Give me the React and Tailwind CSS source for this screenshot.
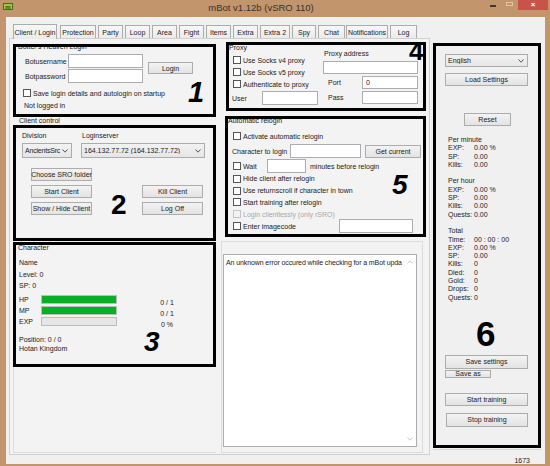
import React from "react";

function Btn({ className = "", children }) {
  return (
    <div
      className={
        "flex items-center justify-center shrink-0 whitespace-nowrap border border-[#acacac] bg-linear-to-b from-[#f3f3f3] to-[#e3e3e3] " +
        className
      }
    >
      {children}
    </div>
  );
}

function Input({ className = "", children }) {
  return (
    <div className={"shrink-0 bg-white border border-[#abadb3] flex items-center " + className}>
      {children}
    </div>
  );
}

function Check({ disabled }) {
  return (
    <div
      className={
        disabled
          ? "w-[8px] h-[8px] shrink-0 border border-[#c4c4c4] bg-[#f2f2f2]"
          : "w-[8px] h-[8px] shrink-0 border border-[#555555] bg-white"
      }
    />
  );
}

function Chevron({ color = "#444444" }) {
  return (
    <svg width="6" height="4" viewBox="0 0 6 4" className="shrink-0">
      <polyline points="0.5,0.5 3,3.2 5.5,0.5" fill="none" stroke={color} strokeWidth="0.9" />
    </svg>
  );
}

function Select({ className = "", children }) {
  return (
    <div
      className={
        "flex items-center justify-between shrink-0 border border-[#acacac] bg-linear-to-b from-[#f2f2f2] to-[#e6e6e6] pl-[2px] pr-[3px] overflow-hidden whitespace-nowrap " +
        className
      }
    >
      <span className="overflow-hidden">{children}</span>
      <Chevron />
    </div>
  );
}

function CheckRow({ className = "", label, disabled }) {
  return (
    <div className={"flex items-center " + className}>
      <Check disabled={disabled} />
      <span className={disabled ? "ml-[2px] text-[#a8a8a8]" : "ml-[2px]"}>{label}</span>
    </div>
  );
}

const tabs = [
  { label: "Client / Login", cls: "w-[44px] h-[15px] bg-white border-[#acacac] relative z-10 -mb-[1px]" },
  { label: "Protection", cls: "ml-[3px] w-[36px] h-[13px]" },
  { label: "Party", cls: "ml-[2px] w-[25px] h-[13px]" },
  { label: "Loop", cls: "ml-[2px] w-[25px] h-[13px]" },
  { label: "Area", cls: "ml-[2px] w-[25px] h-[13px]" },
  { label: "Fight", cls: "ml-[2px] w-[25px] h-[13px]" },
  { label: "Items", cls: "ml-[2px] w-[25px] h-[13px]" },
  { label: "Extra", cls: "ml-[2px] w-[25px] h-[13px]" },
  { label: "Extra 2", cls: "ml-[2px] w-[30px] h-[13px]" },
  { label: "Spy", cls: "ml-[2px] w-[24px] h-[13px]" },
  { label: "Chat", cls: "ml-[2px] w-[27px] h-[13px]" },
  { label: "Notifications", cls: "ml-[1px] w-[42px] h-[13px]" },
  { label: "Log", cls: "ml-[2px] w-[27px] h-[13px]" },
];

function TitleBar() {
  return (
    <div className="h-[17px] flex items-start shrink-0">
      <div className="ml-[3px] mt-[3px] w-[10px] h-[7px] bg-[#a9c53c] border border-[#4d6b12] flex items-center justify-center">
        <span className="text-[6px] leading-[6px] font-bold text-[#2d4a08]">m</span>
      </div>
      <div className="flex-1 pl-[21px] pt-[2px] text-center text-[9.5px] leading-[11px] text-[#333333]">
        mBot v1.12b (vSRO 110)
      </div>
      <div className="w-[62px] h-[10px] flex items-start">
        <div className="mt-[5px] ml-[2px] w-[6px] h-[1.5px] bg-[#3a3a3a]" />
        <div className="mt-[2px] ml-[10px] w-[7px] h-[4px] border border-[#e3c3a5]" />
        <div className="ml-[5px] w-[30px] h-[10px] bg-[#c9534b] flex items-center justify-center text-white text-[8px] leading-[8px] font-bold">
          ×
        </div>
      </div>
    </div>
  );
}

function LeftColumn() {
  return (
    <div className="ml-[3px] w-[203px] flex flex-col shrink-0">
      {/* Box 1 */}
      <div className="relative mt-[5px] w-[203px] h-[73px] border-[3px] border-black overflow-hidden flex flex-col">
        <div className="-mt-[4px] ml-[2px] h-[7px] leading-[7px] whitespace-nowrap">Botter's Heaven Login</div>
        <div className="flex mt-[4px] ml-[9px]">
          <div className="grid grid-cols-[43px_75px] gap-y-[1px] items-center">
            <span>Botusername</span>
            <Input className="w-[75px] h-[14px]" />
            <span>Botpassword</span>
            <Input className="w-[75px] h-[14px]" />
          </div>
          <Btn className="ml-[5px] mt-[8px] w-[45px] h-[12px]">Login</Btn>
        </div>
        <CheckRow className="mt-[6px] ml-[7px]" label="Save login details and autologin on startup" />
        <div className="mt-[5px] ml-[8px]">Not logged in</div>
        <div className="absolute left-[172px] top-[31px] text-[29px] leading-none font-bold italic text-black">1</div>
      </div>

      <div className="h-[8px] pl-[6px] leading-[8px] whitespace-nowrap">Client control</div>

      {/* Box 2 */}
      <div className="relative w-[203px] h-[116px] border-[3px] border-black flex flex-col">
        <div className="flex mt-[4px] ml-[6px]">
          <span className="w-[60px]">Division</span>
          <span>Loginserver</span>
        </div>
        <div className="flex mt-[4px] ml-[6px]">
          <Select className="w-[50px] h-[15px] tracking-[-0.2px]">AncientsSrc</Select>
          <Select className="ml-[9px] w-[124px] h-[15px]">164.132.77.72 (164.132.77.72)</Select>
        </div>
        <Btn className="mt-[10px] ml-[15px] w-[61px] h-[13px]">Choose SRO folder</Btn>
        <div className="flex mt-[4px] ml-[15px]">
          <Btn className="w-[61px] h-[13px]">Start Client</Btn>
          <Btn className="ml-[50px] w-[61px] h-[13px]">Kill Client</Btn>
        </div>
        <div className="flex mt-[4px] ml-[15px]">
          <Btn className="w-[61px] h-[13px]">Show / Hide Client</Btn>
          <Btn className="ml-[50px] w-[61px] h-[13px]">Log Off</Btn>
        </div>
        <div className="absolute left-[95px] top-[63px] text-[28px] leading-none font-bold text-black">2</div>
      </div>

      {/* Box 3 */}
      <div className="relative mt-[1px] w-[203px] h-[125px] border-[3px] border-black flex flex-col pl-[3px]">
        <div className="-mt-[1px] -ml-[1px] h-[7px] leading-[7px]">Character</div>
        <div className="mt-[6px] leading-[11.5px]">Name</div>
        <div className="leading-[11.5px]">Level: 0</div>
        <div className="leading-[11.5px]">SP: 0</div>
        <div className="mt-[2px] flex flex-col">
          {[
            { l: "HP", bar: "bg-[#06b025]", v: "0 / 1" },
            { l: "MP", bar: "bg-[#06b025]", v: "0 / 1" },
            { l: "EXP", bar: "bg-[#e6e6e6]", v: "0 %" },
          ].map((r) => (
            <div key={r.l} className="flex items-center h-[11px]">
              <span className="w-[22px]">{r.l}</span>
              <div className={"w-[76px] h-[9px] border border-[#bcbcbc] " + r.bar} />
              <span className="ml-[25px] w-[50px] text-center translate-y-[3px]">{r.v}</span>
            </div>
          ))}
        </div>
        <div className="mt-[8px] leading-[9px]">Position: 0 / 0</div>
        <div className="leading-[9px]">Hotan Kingdom</div>
        <div className="absolute left-[128px] top-[83px] text-[28px] leading-none font-bold italic text-black">3</div>
      </div>
      <div className="h-[86px] border-l border-b border-[#dcdcdc]" />
    </div>
  );
}

function RightColumn() {
  return (
    <div className="ml-[5px] w-[205px] flex flex-col shrink-0">
      {/* Box 4 */}
      <div className="relative ml-[5px] mt-[3px] w-[200px] h-[69px] border-[3px] border-black flex flex-col">
        <div className="-mt-[1px] h-[7px] leading-[7px]">Proxy</div>
        <div className="flex">
          <div className="w-[94px] flex flex-col">
            <CheckRow className="mt-[3px] h-[12px] pl-[4px]" label="Use Socks v4 proxy" />
            <CheckRow className="h-[12px] pl-[4px]" label="Use Socks v5 proxy" />
            <CheckRow className="h-[12px] pl-[4px]" label="Authenticate to proxy" />
            <div className="mt-[1px] flex items-center pl-[3px]">
              <span className="w-[30px]">User</span>
              <Input className="w-[56px] h-[14px]" />
            </div>
          </div>
          <div className="flex flex-col">
            <div className="-mt-[1px] ml-[1px] h-[7px] leading-[7px]">Proxy address</div>
            <Input className="mt-[4px] w-[95px] h-[13px]" />
            <div className="mt-[2px] flex items-center">
              <span className="w-[39px] pl-[5px]">Port</span>
              <Input className="w-[56px] h-[13px] pl-[3px]">0</Input>
            </div>
            <div className="mt-[2px] flex items-center">
              <span className="w-[39px] pl-[5px]">Pass</span>
              <Input className="w-[56px] h-[13px]" />
            </div>
          </div>
        </div>
        <div className="absolute left-[180px] top-[-7px] text-[26px] leading-none font-bold text-black">4</div>
      </div>

      {/* Box 5 */}
      <div className="relative ml-[4px] mt-[5px] w-[201px] h-[121px] border-[3px] border-black overflow-hidden flex flex-col">
        <div className="-mt-[2px] h-[7px] leading-[7px] whitespace-nowrap">Automatic relogin</div>
        <CheckRow className="mt-[7px] h-[10px] pl-[5px]" label="Activate automatic relogin" />
        <div className="mt-[3px] flex items-center">
          <span className="w-[62px] pl-[4px] whitespace-nowrap">Character to login</span>
          <Input className="w-[71px] h-[14px]" />
          <Btn className="ml-[4px] w-[56px] h-[13px]">Get current</Btn>
        </div>
        <div className="mt-[1px] flex items-center pl-[5px]">
          <Check />
          <span className="ml-[2px] w-[24px]">Wait</span>
          <Input className="w-[39px] h-[14px]" />
          <span className="ml-[4px] whitespace-nowrap">minutes before relogin</span>
        </div>
        <CheckRow className="h-[11.75px] pl-[5px]" label="Hide client after relogin" />
        <CheckRow className="h-[11.75px] pl-[5px]" label="Use returnscroll if character in town" />
        <CheckRow className="h-[11.75px] pl-[5px]" label="Start training after relogin" />
        <CheckRow className="h-[11.75px] pl-[5px]" label="Login clientlessly (only rSRO)" disabled />
        <div className="-mt-[1px] flex items-center pl-[5px]">
          <Check />
          <span className="ml-[2px] w-[96px]">Enter imagecode</span>
          <Input className="w-[74px] h-[14px]" />
        </div>
        <div className="absolute left-[164px] top-[52px] text-[28px] leading-none font-bold italic text-black">5</div>
      </div>

      {/* Log */}
      <div className="mt-[4px] w-[202px] h-[212px] border border-[#dcdcdc] flex flex-col">
        <div className="ml-[1px] mt-[12px] w-[194px] h-[193px] bg-white border border-[#abadb3] flex">
          <div className="flex-1 pl-[2px] pt-[4px] whitespace-nowrap overflow-hidden tracking-[-0.1px]">
            An unknown error occured while checking for a mBot upda
          </div>
          <div className="w-[12px] flex flex-col items-center justify-between py-[5px]">
            <svg width="6" height="4" viewBox="0 0 6 4">
              <polyline points="0.5,3.5 3,0.8 5.5,3.5" fill="none" stroke="#c2c2c2" strokeWidth="0.9" />
            </svg>
            <Chevron color="#c2c2c2" />
          </div>
        </div>
      </div>
    </div>
  );
}

function Stats() {
  const rows = [
    ["Per minute", null],
    ["EXP:", "0.00 %"],
    ["SP:", "0.00"],
    ["Kills:", "0.00"],
    ["", null],
    ["Per hour", null],
    ["EXP:", "0.00 %"],
    ["SP:", "0.00"],
    ["Kills:", "0.00"],
    ["Quests:", "0.00"],
    ["", null],
    ["Total", null],
    ["Time:", "00 : 00 : 00"],
    ["EXP:", "0.00 %"],
    ["SP:", "0.00"],
    ["Kills:", "0"],
    ["Died:", "0"],
    ["Gold:", "0"],
    ["Drops:", "0"],
    ["Quests:", "0"],
  ];
  return (
    <div className="mt-[10px] ml-[12px] flex flex-col">
      {rows.map((r, i) => (
        <div key={i} className="flex h-[8.3px] leading-[8.3px] whitespace-nowrap">
          {r[1] === null ? (
            <span>{r[0]}</span>
          ) : (
            <>
              <span className="w-[26px]">{r[0]}</span>
              <span>{r[1]}</span>
            </>
          )}
        </div>
      ))}
    </div>
  );
}

function SidePanel() {
  return (
    <div className="ml-[3px] mt-[26px] w-[108px] flex flex-col shrink-0">
      <div className="relative w-[108px] h-[405px] border-[3px] border-black flex flex-col">
        <Select className="mt-[8px] ml-[9px] w-[83px] h-[13px]">English</Select>
        <Btn className="mt-[6px] ml-[9px] w-[83px] h-[13px]">Load Settings</Btn>
        <Btn className="mt-[27px] ml-[28px] w-[47px] h-[13px]">Reset</Btn>
        <Stats />
        <Btn className="mt-[53px] ml-[9px] w-[83px] h-[14px]">Save settings</Btn>
        <Btn className="mt-[1px] ml-[9px] w-[46px] h-[8px]">Save as</Btn>
        <Btn className="mt-[15px] ml-[9px] w-[83px] h-[13px]">Start training</Btn>
        <Btn className="mt-[7px] ml-[10px] w-[82px] h-[14px]">Stop training</Btn>
        <div className="absolute left-[40px] top-[270px] text-[35px] leading-none font-bold text-black">6</div>
      </div>
      <div className="mt-[1px] border-t border-[#d6d6d6]" />
      <div className="mt-[7px] pr-[11px] text-right">1673</div>
    </div>
  );
}

export default function App() {
  return (
    <div className="w-[550px] h-[466px] bg-[#c3956c] flex flex-col overflow-hidden font-['Liberation_Sans',Arial,sans-serif] text-[7px] leading-[7px] text-[#1a1a1a]">
      <TitleBar />
      <div className="ml-[6px] w-[539px] h-[447px] bg-[#f0f0f0] flex items-start">
        <div className="ml-[3px] mt-[6px] w-[421px] h-[432px] flex flex-col shrink-0">
          <div className="h-[15px] flex items-end pl-[4px]">
            {tabs.map((t) => (
              <div
                key={t.label}
                className={
                  "flex items-center justify-center shrink-0 whitespace-nowrap border border-b-0 border-[#acacac] bg-linear-to-b from-[#f7f7f7] to-[#ebebeb] " +
                  t.cls
                }
              >
                {t.label}
              </div>
            ))}
          </div>
          <div className="h-[417px] border border-[#d0d0d0] bg-[#f3f3f3] flex items-start">
            <LeftColumn />
            <RightColumn />
          </div>
        </div>
        <SidePanel />
      </div>
    </div>
  );
}
